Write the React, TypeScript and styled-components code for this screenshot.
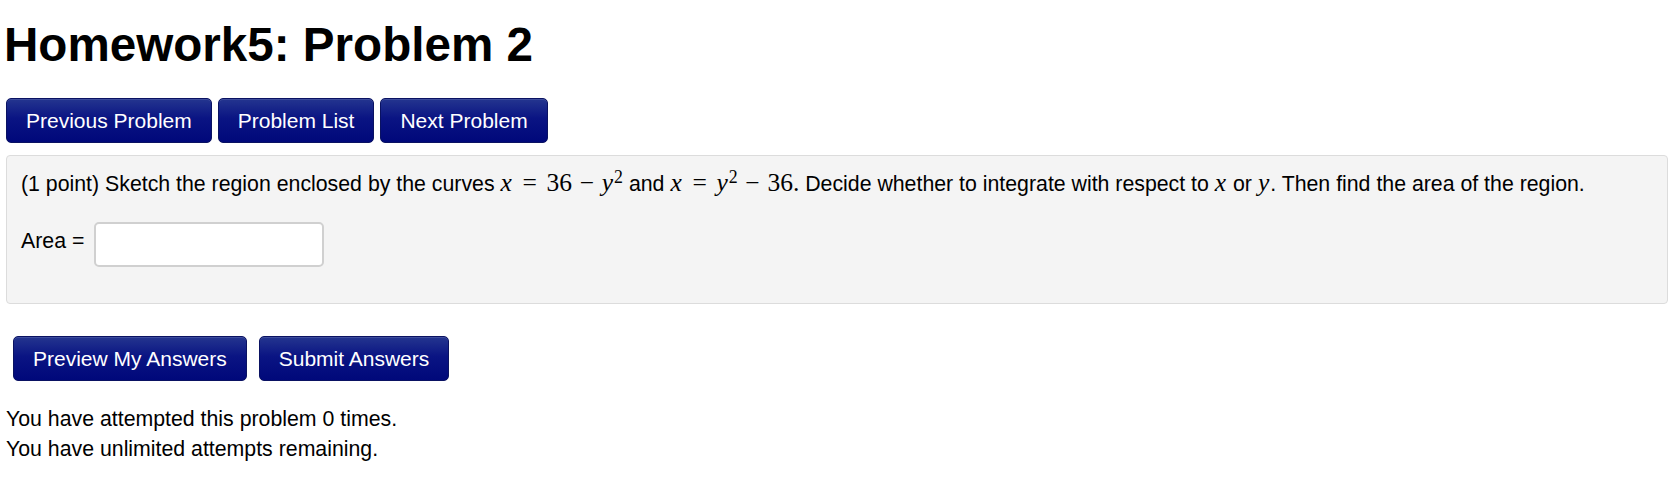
import styled, { createGlobalStyle } from 'styled-components';

const GlobalStyle = createGlobalStyle`
  body {
    margin: 0;
    background: #fff;
    color: #000;
    font-family: "Liberation Sans", Arial, sans-serif;
  }
`;

const Page = styled.div`
  padding: 18px 8px 0 6px;
`;

const Title = styled.h1`
  margin: 0 0 0 -2px;
  font-size: 47.6px;
  font-weight: bold;
  line-height: 53px;
`;

const ButtonRow = styled.div<{ $inset?: boolean }>`
  display: flex;
  gap: ${(p) => (p.$inset ? '12px' : '6px')};
  padding-left: ${(p) => (p.$inset ? '7px' : '0')};
  margin-top: ${(p) => (p.$inset ? '32px' : '27px')};
`;

const NavButton = styled.button`
  box-sizing: border-box;
  height: 45px;
  padding: 0 19px;
  border: 1px solid #0a1262;
  border-radius: 5px;
  background: linear-gradient(to bottom, #24358f 0%, #0a1483 45%, #00087a 100%);
  box-shadow: inset 0 1px 0 rgba(255, 255, 255, 0.12);
  color: #fff;
  font-family: "Liberation Sans", Arial, sans-serif;
  font-size: 21px;
  cursor: pointer;
`;

const ProblemBox = styled.div`
  margin-top: 12px;
  padding: 13px 14px 36px;
  background: #f4f4f4;
  border: 1px solid #dcdcdc;
  border-radius: 4px;
  font-size: 21.3px;
`;

const Statement = styled.p`
  margin: 0;
  line-height: 30px;
`;

const Math = styled.span`
  font-family: "Liberation Serif", "Times New Roman", serif;
  font-size: 25.5px;
  line-height: 1;
  white-space: nowrap;
`;

const Var = styled.span`
  font-style: italic;
  padding-right: 1px;
`;

const Op = styled.span<{ $rel?: boolean }>`
  margin: 0 ${(p) => (p.$rel ? '0.38em' : '0.3em')};
`;

const Sup = styled.sup`
  font-size: 0.7em;
  line-height: 0;
  vertical-align: 0.45em;
`;

const AnswerRow = styled.div`
  display: flex;
  align-items: center;
  gap: 10px;
  margin-top: 23px;
`;

const Label = styled.label`
  margin-bottom: 6px;
`;

const AnswerInput = styled.input`
  box-sizing: border-box;
  width: 230px;
  height: 45px;
  border: 2px solid #d0d0d0;
  border-radius: 5px;
  background: #fff;
  font-size: 21px;
  padding: 0 8px;
  outline: none;
`;

const Status = styled.div`
  margin-top: 23px;
  font-size: 21.3px;
  line-height: 30px;
`;

const X = () => <Var>x</Var>;
const Y = () => <Var>y</Var>;

export default function App() {
  return (
    <>
      <GlobalStyle />
      <Page>
        <Title>Homework5: Problem 2</Title>
        <ButtonRow>
          <NavButton>Previous Problem</NavButton>
          <NavButton>Problem List</NavButton>
          <NavButton>Next Problem</NavButton>
        </ButtonRow>
        <ProblemBox>
          <Statement>
            (1 point) Sketch the region enclosed by the curves{' '}
            <Math>
              <X />
              <Op $rel>=</Op>36<Op>−</Op>
              <Y />
              <Sup>2</Sup>
            </Math>{' '}
            and{' '}
            <Math>
              <X />
              <Op $rel>=</Op>
              <Y />
              <Sup>2</Sup>
              <Op>−</Op>36.
            </Math>{' '}
            Decide whether to integrate with respect to <Math><X /></Math> or{' '}
            <Math><Y /></Math>. Then find the area of the region.
          </Statement>
          <AnswerRow>
            <Label htmlFor="area">Area =</Label>
            <AnswerInput id="area" type="text" />
          </AnswerRow>
        </ProblemBox>
        <ButtonRow $inset>
          <NavButton>Preview My Answers</NavButton>
          <NavButton>Submit Answers</NavButton>
        </ButtonRow>
        <Status>
          You have attempted this problem 0 times.
          <br />
          You have unlimited attempts remaining.
        </Status>
      </Page>
    </>
  );
}
